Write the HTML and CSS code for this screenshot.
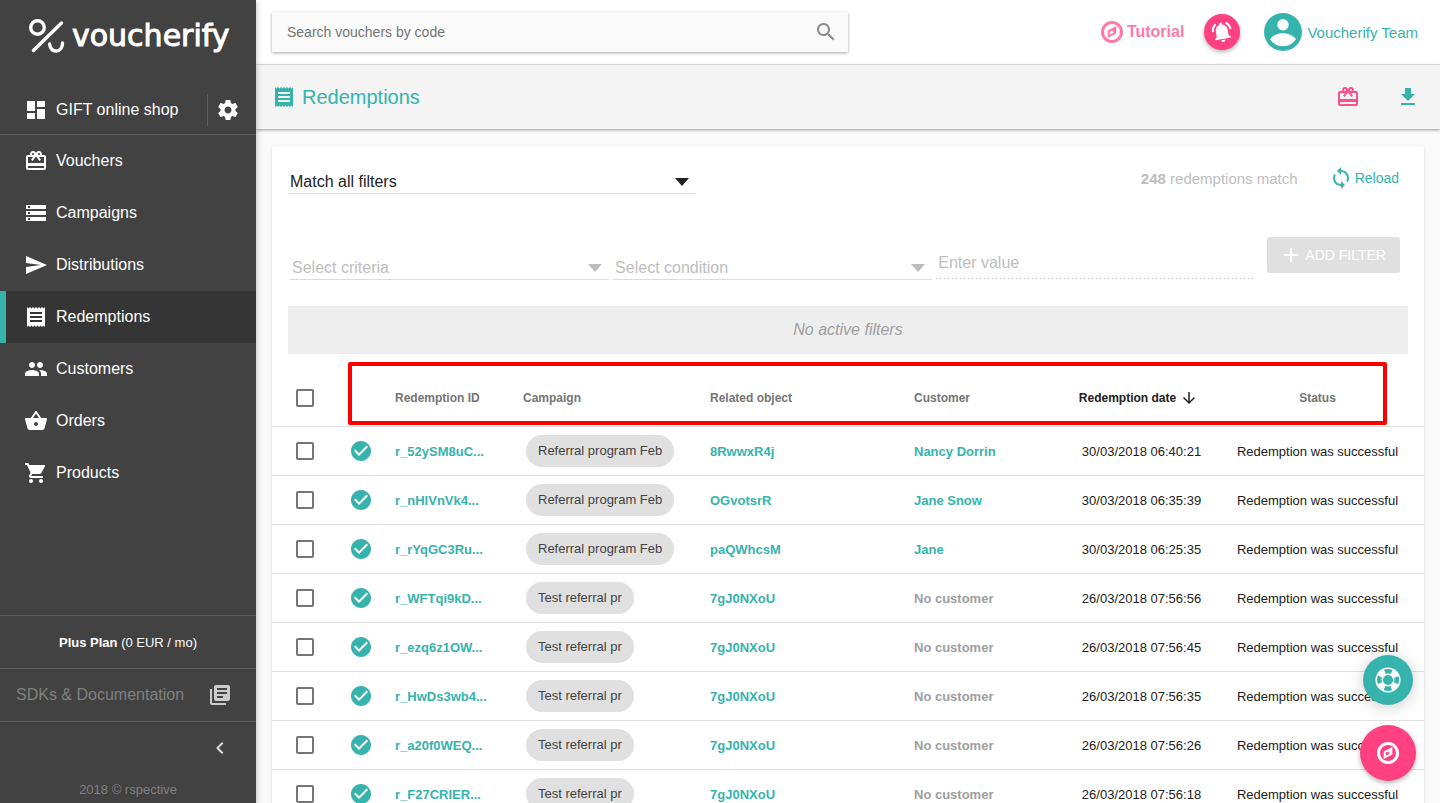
FILE: index.html
```
<!DOCTYPE html>
<html lang="en">

<head>
    <meta charset="UTF-8">
    <meta name="viewport" content="width=device-width, initial-scale=1.0">
    <title>Redemptions - Voucherify</title>
    <link rel="stylesheet" href="styles.css">
</head>

<body>

    <svg class="sprite" aria-hidden="true">
        <symbol id="dashboard" viewBox="0 0 24 24"><path d="M3 13h8V3H3v10zm0 8h8v-6H3v6zm10 0h8V11h-8v10zm0-18v6h8V3h-8z"/></symbol>
        <symbol id="settings" viewBox="0 0 24 24"><path d="M19.43 12.98c.04-.32.07-.64.07-.98s-.03-.66-.07-.98l2.11-1.65c.19-.15.24-.42.12-.64l-2-3.46c-.12-.22-.39-.3-.61-.22l-2.49 1c-.52-.4-1.08-.73-1.69-.98l-.38-2.65C14.46 2.18 14.25 2 14 2h-4c-.25 0-.46.18-.49.42l-.38 2.65c-.61.25-1.17.59-1.69.98l-2.49-1c-.23-.09-.49 0-.61.22l-2 3.46c-.13.22-.07.49.12.64l2.11 1.65c-.04.32-.07.65-.07.98s.03.66.07.98l-2.11 1.65c-.19.15-.24.42-.12.64l2 3.46c.12.22.39.3.61.22l2.49-1c.52.4 1.08.73 1.69.98l.38 2.65c.03.24.24.42.49.42h4c.25 0 .46-.18.49-.42l.38-2.65c.61-.25 1.17-.59 1.69-.98l2.49 1c.23.09.49 0 .61-.22l2-3.46c.12-.22.07-.49-.12-.64l-2.11-1.65zM12 15.5c-1.93 0-3.500-1.570-3.500-3.500s1.570-3.500 3.500-3.500 3.500 1.570 3.500 3.500-1.570 3.500-3.500 3.500z"/></symbol>
        <symbol id="gift" viewBox="0 0 24 24"><path d="M20 6h-2.18c.11-.31.18-.65.18-1 0-1.66-1.34-3-3-3-1.05 0-1.960.54-2.500 1.350l-.5.67-.5-.68C10.960 2.540 10.050 2 9 2 7.340 2 6 3.340 6 5c0 .35.07.69.18 1H4c-1.110 0-1.990.89-1.990 2L2 19c0 1.110.89 2 2 2h16c1.110 0 2-.89 2-2V8c0-1.110-.89-2-2-2zm-5-2c.55 0 1 .45 1 1s-.45 1-1 1-1-.45-1-1 .45-1 1-1zM9 4c.55 0 1 .45 1 1s-.45 1-1 1-1-.45-1-1 .45-1 1-1zm11 15H4v-2h16v2zm0-5H4V8h5.080L7 10.830 8.620 12 11 8.760l1-1.360 1 1.360L15.380 12 17 10.830 14.920 8H20v6z"/></symbol>
        <symbol id="storage" viewBox="0 0 24 24"><path d="M2 20h20v-4H2v4zm2-3h2v2H4v-2zM2 4v4h20V4H2zm4 3H4V5h2v2zm-4 7h20v-4H2v4zm2-3h2v2H4v-2z"/></symbol>
        <symbol id="send" viewBox="0 0 24 24"><path d="M2.010 21L23 12 2.010 3 2 10l15 2-15 2z"/></symbol>
        <symbol id="receipt" viewBox="0 0 24 24"><path d="M18 17H6v-2h12v2zm0-4H6v-2h12v2zm0-4H6V7h12v2zM3 22l1.500-1.500L6 22l1.500-1.500L9 22l1.500-1.500L12 22l1.500-1.500L15 22l1.500-1.500L18 22l1.500-1.500L21 22V2l-1.500 1.500L18 2l-1.500 1.500L15 2l-1.500 1.500L12 2l-1.500 1.500L9 2 7.500 3.500 6 2 4.500 3.500 3 2v20z"/></symbol>
        <symbol id="people" viewBox="0 0 24 24"><path d="M16 11c1.660 0 2.990-1.340 2.990-3S17.660 5 16 5s-3 1.340-3 3 1.340 3 3 3zm-8 0c1.660 0 2.990-1.340 2.990-3S9.660 5 8 5 5 6.340 5 8s1.340 3 3 3zm0 2c-2.330 0-7 1.170-7 3.500V19h14v-2.500C15 14.170 10.330 13 8 13zm8 0c-.29 0-.62.02-.97.05 1.160.84 1.970 1.970 1.970 3.450V19h6v-2.500c0-2.330-4.670-3.500-7-3.500z"/></symbol>
        <symbol id="basket" viewBox="0 0 24 24"><path d="M17.210 9l-4.380-6.560c-.19-.28-.51-.42-.83-.42s-.64.14-.83.43L6.790 9H2c-.55 0-1 .45-1 1 0 .09.010.18.040.27l2.540 9.270c.23.84 1 1.460 1.920 1.460h13c.92 0 1.690-.62 1.930-1.460l2.540-9.270L23 10c0-.55-.45-1-1-1h-4.790zM9 9l3-4.400L15 9H9zm3 8c-1.100 0-2-.9-2-2s.9-2 2-2 2 .9 2 2-.9 2-2 2z"/></symbol>
        <symbol id="cart" viewBox="0 0 24 24"><path d="M7 18c-1.100 0-1.990.9-1.990 2S5.900 22 7 22s2-.9 2-2-.9-2-2-2zM1 2v2h2l3.600 7.590-1.350 2.450c-.16.28-.25.61-.25.96 0 1.100.9 2 2 2h12v-2H7.420c-.14 0-.25-.11-.25-.25l.03-.12.9-1.630h7.450c.75 0 1.410-.41 1.750-1.030l3.580-6.490c.08-.14.12-.31.12-.48 0-.55-.45-1-1-1H5.210l-.94-2H1zm16 16c-1.100 0-1.990.9-1.990 2s.89 2 1.990 2 2-.9 2-2-.9-2-2-2z"/></symbol>
        <symbol id="library" viewBox="0 0 24 24"><path d="M4 6H2v14c0 1.100.9 2 2 2h14v-2H4V6zm16-4H8c-1.100 0-2 .9-2 2v12c0 1.100.9 2 2 2h12c1.100 0 2-.9 2-2V4c0-1.100-.9-2-2-2zm-1 9H9V9h10v2zm-4 4H9v-2h6v2zm4-8H9V5h10v2z"/></symbol>
        <symbol id="chevron-left" viewBox="0 0 24 24"><path d="M15.410 7.410L14 6l-6 6 6 6 1.410-1.410L10.830 12z"/></symbol>
        <symbol id="search" viewBox="0 0 24 24"><path d="M15.500 14h-.79l-.28-.27C15.410 12.590 16 11.110 16 9.500 16 5.910 13.090 3 9.500 3S3 5.910 3 9.500 5.910 16 9.500 16c1.610 0 3.090-.59 4.230-1.570l.27.28v.79l5 4.990L20.490 19l-4.990-5zm-6 0C7.010 14 5 11.990 5 9.500S7.010 5 9.500 5 14 7.010 14 9.500 11.990 14 9.500 14z"/></symbol>
        <symbol id="compass" viewBox="1 1 22 22"><circle cx="12" cy="12" r="9.500" fill="none" stroke="currentColor" stroke-width="3"/><path fill-rule="evenodd" d="M16.300 6v7.500l-8.600 4.500v-7.500zM9.800 11.700v3l4-2.100-1.700-2.100z"/></symbol>
        <symbol id="bell" viewBox="0 0 24 24"><path d="M7.580 4.080L6.150 2.650C3.750 4.480 2.170 7.300 2.030 10.500h2c.15-2.650 1.510-4.970 3.550-6.420zm12.390 6.420h2c-.15-3.200-1.730-6.020-4.120-7.850l-1.420 1.430c2.020 1.450 3.390 3.770 3.540 6.420zM18 11c0-3.070-1.640-5.640-4.500-6.320V4c0-.83-.67-1.500-1.500-1.500s-1.500.67-1.500 1.500v.68C7.630 5.360 6 7.920 6 11v5l-2 2v1h16v-1l-2-2v-5zm-6 11c.14 0 .27-.01.4-.04.65-.14 1.180-.58 1.440-1.180.1-.24.15-.5.15-.78h-4c.01 1.100.9 2 2.010 2z"/></symbol>
        <symbol id="account" viewBox="2 2 20 20">
            <circle cx="12" cy="12" r="10"/>
            <circle cx="12" cy="8.200" r="3" fill="#fff"/>
            <path fill="#fff" d="M5.200 15.700C6.700 13.600 9.600 12.600 12 12.600s5.300 1 6.800 3.100c-1.500 2.500-4.100 3.800-6.800 3.800s-5.300-1.300-6.800-3.800z"/>
        </symbol>
        <symbol id="download" viewBox="0 0 24 24"><path d="M19 9h-4V3H9v6H5l7 7 7-7zM5 18v2h14v-2H5z"/></symbol>
        <symbol id="sync" viewBox="0 0 24 24"><path d="M12 4V1L8 5l4 4V6c3.310 0 6 2.690 6 6 0 1.010-.25 1.970-.7 2.800l1.460 1.460C19.540 15.030 20 13.570 20 12c0-4.420-3.580-8-8-8zm0 14c-3.310 0-6-2.690-6-6 0-1.010.25-1.970.7-2.800L5.240 7.740C4.460 8.970 4 10.430 4 12c0 4.420 3.580 8 8 8v3l4-4-4-4v3z"/></symbol>
        <symbol id="add" viewBox="0 0 24 24"><path d="M19 13h-6v6h-2v-6H5v-2h6V5h2v6h6v2z"/></symbol>
        <symbol id="arrow-down" viewBox="0 0 24 24"><path d="M20 12l-1.410-1.410L13 16.170V4h-2v12.170l-5.580-5.590L4 12l8 8 8-8z"/></symbol>
        <symbol id="check-circle" viewBox="0 0 24 24"><path d="M12 2C6.480 2 2 6.480 2 12s4.480 10 10 10 10-4.480 10-10S17.520 2 12 2zm-2 15l-5-5 1.410-1.410L10 14.170l7.590-7.590L19 8l-9 9z"/></symbol>
        <symbol id="lifebuoy" viewBox="0 0 26 26">
            <g fill="none" stroke="currentColor">
                <circle cx="13" cy="13" r="11.800" stroke-width="1.500"/>
                <circle cx="13" cy="13" r="5.800" stroke-width="1.400"/>
                <circle cx="13" cy="13" r="8.800" stroke-width="6" stroke-dasharray="6.900 6.920" stroke-dashoffset="-3.460"/>
            </g>
        </symbol>
    </svg>

    <aside class="sidebar">
        <a href="#" class="logo">
            <svg class="logo-mark" viewBox="0 0 36 34" fill="none" stroke="currentColor" stroke-width="3.400" stroke-linecap="round">
                <circle cx="8.500" cy="8.500" r="6.800"/>
                <path d="M32.500 4L4.500 31.500M20.500 25c.8 4.500 3 7 6.500 7s6.500-3 6.500-8"/>
            </svg>
            <span>voucherify</span>
        </a>

        <div class="project">
            <a href="#" class="nav-link"><svg class="icon"><use href="#dashboard"/></svg>GIFT online shop</a>
            <button class="project-settings" aria-label="Project settings"><svg class="icon"><use href="#settings"/></svg></button>
        </div>

        <nav>
            <a href="#" class="nav-link"><svg class="icon"><use href="#gift"/></svg>Vouchers</a>
            <a href="#" class="nav-link"><svg class="icon"><use href="#storage"/></svg>Campaigns</a>
            <a href="#" class="nav-link"><svg class="icon"><use href="#send"/></svg>Distributions</a>
            <a href="#" class="nav-link active"><svg class="icon"><use href="#receipt"/></svg>Redemptions</a>
            <a href="#" class="nav-link"><svg class="icon"><use href="#people"/></svg>Customers</a>
            <a href="#" class="nav-link"><svg class="icon"><use href="#basket"/></svg>Orders</a>
            <a href="#" class="nav-link"><svg class="icon"><use href="#cart"/></svg>Products</a>
        </nav>

        <div class="sidebar-bottom">
            <div class="plan"><span><b>Plus Plan</b> (0 EUR / mo)</span></div>
            <a href="#" class="docs">SDKs &amp; Documentation<svg class="icon"><use href="#library"/></svg></a>
            <button class="collapse" aria-label="Collapse menu"><svg class="icon"><use href="#chevron-left"/></svg></button>
            <footer class="copyright">2018 © rspective</footer>
        </div>
    </aside>

    <div class="page">
        <header class="topbar">
            <form class="search">
                <input type="search" placeholder="Search vouchers by code" aria-label="Search vouchers by code">
                <button type="submit" aria-label="Search"><svg class="icon"><use href="#search"/></svg></button>
            </form>
            <div class="account">
                <a href="#" class="tutorial"><svg><use href="#compass"/></svg>Tutorial</a>
                <button class="notifications" aria-label="Notifications"><svg class="icon"><use href="#bell"/></svg></button>
                <a href="#" class="team"><svg><use href="#account"/></svg>Voucherify Team</a>
            </div>
        </header>

        <div class="titlebar">
            <h1><svg class="icon"><use href="#receipt"/></svg>Redemptions</h1>
            <div class="title-actions">
                <button class="redeem" aria-label="Redeem voucher"><svg class="icon"><use href="#gift"/></svg></button>
                <button aria-label="Export"><svg class="icon"><use href="#download"/></svg></button>
            </div>
        </div>

        <main>
            <div class="card">
                <div class="filters">
                    <div class="match-row">
                        <div class="select match">
                            <select aria-label="Filter matching">
                                <option>Match all filters</option>
                            </select>
                        </div>
                        <div class="results">
                            <span><b>248</b> redemptions match</span>
                            <button class="reload"><svg class="icon"><use href="#sync"/></svg>Reload</button>
                        </div>
                    </div>

                    <div class="criteria-row">
                        <div class="select empty">
                            <select aria-label="Criteria">
                                <option>Select criteria</option>
                            </select>
                        </div>
                        <div class="select empty">
                            <select aria-label="Condition">
                                <option>Select condition</option>
                            </select>
                        </div>
                        <input type="text" class="value" placeholder="Enter value" aria-label="Value" disabled>
                        <button class="add-filter" disabled><svg class="icon"><use href="#add"/></svg>ADD FILTER</button>
                    </div>

                    <div class="no-filters">No active filters</div>
                </div>

                <div class="table-wrap">
                    <table>
                        <colgroup>
                            <col class="col-check">
                            <col class="col-state">
                            <col class="col-id">
                            <col class="col-campaign">
                            <col class="col-object">
                            <col>
                            <col class="col-date">
                            <col class="col-status">
                        </colgroup>
                        <thead>
                            <tr>
                                <th class="check"><input type="checkbox" aria-label="Select all"></th>
                                <th></th>
                                <th>Redemption ID</th>
                                <th>Campaign</th>
                                <th>Related object</th>
                                <th>Customer</th>
                                <th class="center sorted"><span>Redemption date<svg><use href="#arrow-down"/></svg></span></th>
                                <th class="center">Status</th>
                            </tr>
                        </thead>
                        <tbody>
                            <tr>
                                <td class="check"><input type="checkbox" aria-label="Select r_52ySM8uC"></td>
                                <td class="state"><svg class="icon"><use href="#check-circle"/></svg></td>
                                <td><a href="#">r_52ySM8uC...</a></td>
                                <td><span class="tag">Referral program Feb</span></td>
                                <td><a href="#">8RwwxR4j</a></td>
                                <td><a href="#">Nancy Dorrin</a></td>
                                <td class="center">30/03/2018 06:40:21</td>
                                <td class="center">Redemption was successful</td>
                            </tr>
                            <tr>
                                <td class="check"><input type="checkbox" aria-label="Select r_nHlVnVk4"></td>
                                <td class="state"><svg class="icon"><use href="#check-circle"/></svg></td>
                                <td><a href="#">r_nHlVnVk4...</a></td>
                                <td><span class="tag">Referral program Feb</span></td>
                                <td><a href="#">OGvotsrR</a></td>
                                <td><a href="#">Jane Snow</a></td>
                                <td class="center">30/03/2018 06:35:39</td>
                                <td class="center">Redemption was successful</td>
                            </tr>
                            <tr>
                                <td class="check"><input type="checkbox" aria-label="Select r_rYqGC3Ru"></td>
                                <td class="state"><svg class="icon"><use href="#check-circle"/></svg></td>
                                <td><a href="#">r_rYqGC3Ru...</a></td>
                                <td><span class="tag">Referral program Feb</span></td>
                                <td><a href="#">paQWhcsM</a></td>
                                <td><a href="#">Jane</a></td>
                                <td class="center">30/03/2018 06:25:35</td>
                                <td class="center">Redemption was successful</td>
                            </tr>
                            <tr>
                                <td class="check"><input type="checkbox" aria-label="Select r_WFTqi9kD"></td>
                                <td class="state"><svg class="icon"><use href="#check-circle"/></svg></td>
                                <td><a href="#">r_WFTqi9kD...</a></td>
                                <td><span class="tag">Test referral pr</span></td>
                                <td><a href="#">7gJ0NXoU</a></td>
                                <td class="none">No customer</td>
                                <td class="center">26/03/2018 07:56:56</td>
                                <td class="center">Redemption was successful</td>
                            </tr>
                            <tr>
                                <td class="check"><input type="checkbox" aria-label="Select r_ezq6z1OW"></td>
                                <td class="state"><svg class="icon"><use href="#check-circle"/></svg></td>
                                <td><a href="#">r_ezq6z1OW...</a></td>
                                <td><span class="tag">Test referral pr</span></td>
                                <td><a href="#">7gJ0NXoU</a></td>
                                <td class="none">No customer</td>
                                <td class="center">26/03/2018 07:56:45</td>
                                <td class="center">Redemption was successful</td>
                            </tr>
                            <tr>
                                <td class="check"><input type="checkbox" aria-label="Select r_HwDs3wb4"></td>
                                <td class="state"><svg class="icon"><use href="#check-circle"/></svg></td>
                                <td><a href="#">r_HwDs3wb4...</a></td>
                                <td><span class="tag">Test referral pr</span></td>
                                <td><a href="#">7gJ0NXoU</a></td>
                                <td class="none">No customer</td>
                                <td class="center">26/03/2018 07:56:35</td>
                                <td class="center">Redemption was successful</td>
                            </tr>
                            <tr>
                                <td class="check"><input type="checkbox" aria-label="Select r_a20f0WEQ"></td>
                                <td class="state"><svg class="icon"><use href="#check-circle"/></svg></td>
                                <td><a href="#">r_a20f0WEQ...</a></td>
                                <td><span class="tag">Test referral pr</span></td>
                                <td><a href="#">7gJ0NXoU</a></td>
                                <td class="none">No customer</td>
                                <td class="center">26/03/2018 07:56:26</td>
                                <td class="center">Redemption was successful</td>
                            </tr>
                            <tr>
                                <td class="check"><input type="checkbox" aria-label="Select r_F27CRIER"></td>
                                <td class="state"><svg class="icon"><use href="#check-circle"/></svg></td>
                                <td><a href="#">r_F27CRIER...</a></td>
                                <td><span class="tag">Test referral pr</span></td>
                                <td><a href="#">7gJ0NXoU</a></td>
                                <td class="none">No customer</td>
                                <td class="center">26/03/2018 07:56:18</td>
                                <td class="center">Redemption was successful</td>
                            </tr>
                        </tbody>
                    </table>
                    <div class="highlight"></div>
                </div>
            </div>
        </main>
    </div>

    <div class="floating">
        <button class="fab help" aria-label="Help"><svg><use href="#lifebuoy"/></svg></button>
        <button class="fab guide" aria-label="Tutorial"><svg><use href="#compass"/></svg></button>
    </div>

</body>

</html>
```
FILE: styles.css
```
* {
    box-sizing: border-box;
}

body {
    margin: 0;
    height: 100vh;
    display: flex;
    overflow: hidden;
    background: #fafafa;
    color: #212121;
    font-family: "Liberation Sans", Arial, sans-serif;
    font-size: 14px;
}

a {
    color: #36b3ad;
    text-decoration: none;
}

button {
    display: flex;
    align-items: center;
    justify-content: center;
    padding: 0;
    border: 0;
    background: none;
    color: #36b3ad;
    font: inherit;
}

input,
select {
    font: inherit;
}

svg {
    flex: none;
    fill: currentColor;
}

.sprite {
    display: none;
}

.icon {
    width: 24px;
    height: 24px;
}

/* Sidebar */

.sidebar {
    width: 256px;
    flex: none;
    display: flex;
    flex-direction: column;
    background: #424242;
    color: #fff;
    box-shadow: 0 2px 6px rgba(0, 0, 0, 0.3);
    z-index: 2;
}

.logo {
    height: 85px;
    padding: 19px 0 0 29px;
    display: flex;
    align-items: flex-start;
    gap: 7px;
    color: #fff;
    font-family: "DejaVu Sans", sans-serif;
    font-size: 30px;
    line-height: 34px;
    -webkit-text-stroke: 1px #fff;
}

.logo-mark {
    width: 36px;
    height: 34px;
    fill: none;
}

.project {
    height: 50px;
    display: flex;
    align-items: center;
    border-bottom: 1px solid #5e5e5e;
}

.project .nav-link {
    flex: 1;
}

.project-settings {
    width: 49px;
    height: 32px;
    padding-right: 8px;
    border-left: 1px solid #5e5e5e;
    color: #fff;
}

.nav-link {
    height: 52px;
    padding-left: 24px;
    display: flex;
    align-items: center;
    gap: 8px;
    color: #fff;
    font-size: 16px;
}

.nav-link.active {
    padding-left: 18px;
    border-left: 6px solid #36b3ad;
    background: #353535;
}

.sidebar-bottom {
    margin-top: auto;
}

.plan,
.docs {
    height: 53px;
    display: flex;
    align-items: center;
    border-top: 1px solid #5e5e5e;
}

.plan {
    justify-content: center;
    font-size: 13px;
}

.docs {
    justify-content: space-between;
    padding: 0 24px 0 16px;
    color: #808080;
    font-size: 16px;
}

.docs .icon {
    color: #ccc;
}

.collapse {
    width: 100%;
    height: 53px;
    padding-right: 24px;
    justify-content: flex-end;
    border-top: 1px solid #5e5e5e;
    color: #ddd;
}

.copyright {
    height: 29px;
    padding-top: 8px;
    color: #808080;
    font-size: 13px;
    text-align: center;
}

/* Top bar */

.page {
    flex: 1;
    min-width: 0;
    display: flex;
    flex-direction: column;
}

.topbar {
    height: 65px;
    flex: none;
    padding: 0 22px 0 16px;
    display: flex;
    align-items: center;
    justify-content: space-between;
    background: #fff;
    border-bottom: 1px solid #e4e4e4;
}

.search {
    width: 576px;
    height: 40px;
    padding: 0 10px 0 15px;
    display: flex;
    align-items: center;
    background: #fafafa;
    box-shadow: 0 1px 3px rgba(0, 0, 0, 0.35);
}

.search input {
    flex: 1;
    min-width: 0;
    padding: 0;
    border: 0;
    background: none;
}

.search input::placeholder {
    color: #757575;
}

.search button {
    color: #8c8c8c;
}

.account,
.tutorial,
.team {
    display: flex;
    align-items: center;
}

.tutorial {
    gap: 4px;
    color: #ff79a7;
    font-size: 16px;
    font-weight: bold;
}

.tutorial svg {
    width: 22px;
    height: 22px;
}

.notifications {
    width: 36px;
    height: 36px;
    margin: 0 24px 0 20px;
    border-radius: 50%;
    background: #ff4081;
    color: #fff;
    box-shadow: 0 2px 4px rgba(0, 0, 0, 0.3);
}

.notifications .icon {
    transform: rotate(-10deg);
}

.team {
    gap: 5px;
    font-size: 15px;
}

.team svg {
    width: 38px;
    height: 38px;
}

.titlebar {
    height: 64px;
    flex: none;
    padding: 0 20px 0 16px;
    display: flex;
    align-items: center;
    justify-content: space-between;
    background: #f4f4f4;
    color: #36b3ad;
    box-shadow: 0 1px 3px rgba(0, 0, 0, 0.4);
    z-index: 1;
}

h1 {
    margin: 0;
    display: flex;
    align-items: center;
    gap: 6px;
    font-size: 20px;
    font-weight: normal;
}

.title-actions {
    display: flex;
    gap: 36px;
}

.redeem {
    color: #ff4f8b;
}

/* Filters */

main {
    flex: 1;
    min-height: 0;
    padding: 17px 16px;
    overflow-y: auto;
    scrollbar-width: none;
}

.card {
    background: #fff;
    box-shadow: 0 1px 3px rgba(0, 0, 0, 0.15);
}

.filters {
    padding: 16px 16px 0;
}

.match-row {
    padding-right: 9px;
    display: flex;
    align-items: center;
    justify-content: space-between;
}

.select {
    height: 24px;
    padding: 0 7px 0 2px;
    display: flex;
    align-items: center;
    border-bottom: 1px solid #dcdcdc;
    font-size: 16px;
}

.select::after {
    content: "";
    border: 7px solid transparent;
    border-top: 8px solid currentColor;
    border-bottom: 0;
}

.select select {
    flex: 1;
    min-width: 0;
    padding: 0;
    border: 0;
    appearance: none;
    background: none;
    color: inherit;
}

.select.empty {
    color: #bdbdbd;
}

.select.match {
    width: 408px;
    height: 32px;
    padding-top: 8px;
}

.results {
    display: flex;
    align-items: center;
    gap: 31px;
    color: #bdbdbd;
    font-size: 15px;
}

.reload {
    gap: 2px;
    font-size: 14px;
}

.criteria-row {
    height: 43px;
    margin-top: 43px;
    padding: 0 8px 0 2px;
    display: grid;
    grid-template-columns: 1fr 1fr 1fr auto;
    align-items: end;
    gap: 4px;
}

.value {
    min-width: 0;
    height: 32px;
    margin-bottom: 1px;
    padding: 0 2px;
    border: 0;
    background: repeating-linear-gradient(to right, #bdbdbd 0 1px, transparent 1px 4px) bottom / 100% 1px no-repeat;
    font-size: 16px;
}

.value::placeholder {
    color: #bdbdbd;
}

.add-filter {
    height: 36px;
    margin-left: 8px;
    padding: 0 14px 0 12px;
    align-self: start;
    gap: 2px;
    border-radius: 3px;
    background: #e0e0e0;
    color: #fff;
}

.no-filters {
    margin-top: 26px;
    background: #eee;
    color: #9e9e9e;
    font-size: 16px;
    font-style: italic;
    line-height: 48px;
    text-align: center;
}

/* Redemptions table */

.table-wrap {
    position: relative;
    margin-top: 16px;
}

table {
    width: 100%;
    table-layout: fixed;
    border-spacing: 0;
    font-size: 13px;
}

.col-check {
    width: 66px;
}

.col-state {
    width: 57px;
}

.col-id {
    width: 128px;
}

.col-campaign {
    width: 187px;
}

.col-object {
    width: 204px;
}

.col-date {
    width: 139px;
}

.col-status {
    width: 213px;
}

th,
td {
    height: 49px;
    padding: 0;
    border-bottom: 1px solid #e0e0e0;
    text-align: left;
    white-space: nowrap;
}

th {
    height: 57px;
    color: #757575;
    font-size: 12px;
}

td a,
.none {
    font-weight: bold;
}

.none {
    color: #9e9e9e;
}

.check,
.center {
    text-align: center;
}

.check input {
    width: 18px;
    height: 18px;
    margin: 0;
    appearance: none;
    border: 2px solid #757575;
    border-radius: 2px;
    vertical-align: middle;
}

.state {
    padding-left: 11px;
    color: #36b3ad;
}

.state svg {
    display: block;
}

.sorted {
    padding-right: 6px;
    color: #212121;
}

.sorted span {
    display: inline-flex;
    align-items: center;
    gap: 4px;
}

.sorted svg {
    width: 18px;
    height: 18px;
}

.tag {
    display: inline-block;
    margin-left: 3px;
    padding: 0 12px;
    border-radius: 16px;
    background: #e0e0e0;
    color: #424242;
    line-height: 32px;
    vertical-align: middle;
}

/* Frame drawn over the column headings */
.highlight {
    position: absolute;
    top: -8px;
    left: 76px;
    right: 37px;
    height: 63px;
    border: 4px solid #f00;
    border-radius: 2px;
    pointer-events: none;
}

/* Floating buttons */

.floating {
    position: fixed;
    right: 24px;
    bottom: 22px;
    display: flex;
    flex-direction: column;
    align-items: center;
    gap: 20px;
    z-index: 3;
}

.fab {
    border-radius: 50%;
    color: #fff;
}

.help {
    width: 50px;
    height: 50px;
    background: #36b3ad;
    box-shadow: 0 2px 16px rgba(0, 0, 0, 0.2);
}

.help svg {
    width: 26px;
    height: 26px;
}

.guide {
    width: 56px;
    height: 56px;
    background: #ff4081;
    box-shadow: 0 2px 5px rgba(0, 0, 0, 0.3);
}

.guide svg {
    width: 22px;
    height: 22px;
}
```
